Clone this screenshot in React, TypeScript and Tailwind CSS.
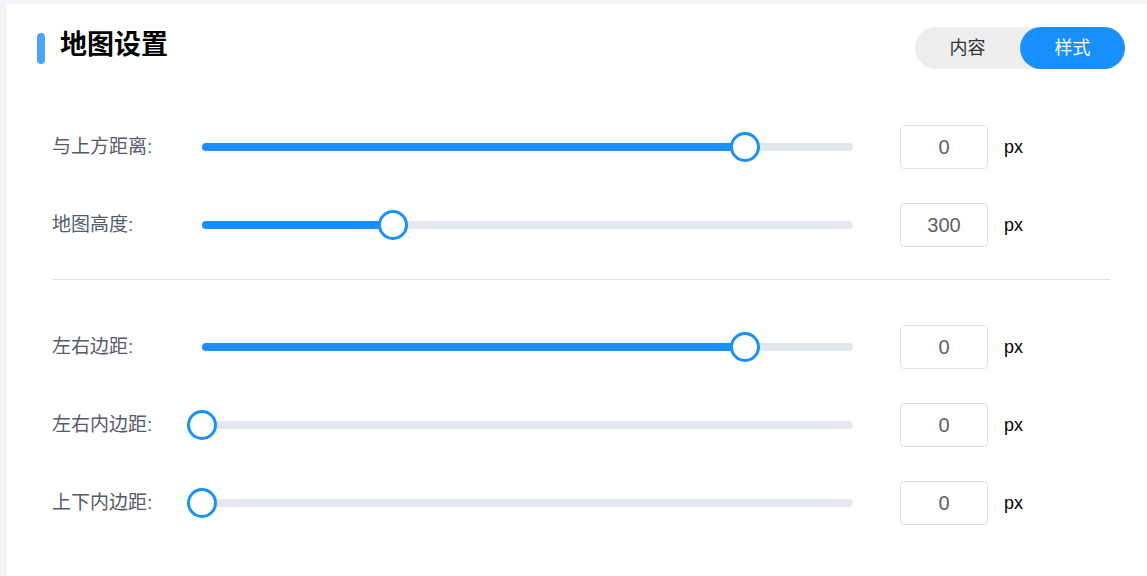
import React from 'react';

type Row = { label: string; value: string; pct: number };

const topRows: Row[] = [
  { label: '与上方距离:', value: '0', pct: 83.4 },
  { label: '地图高度:', value: '300', pct: 29.3 },
];

const bottomRows: Row[] = [
  { label: '左右边距:', value: '0', pct: 83.4 },
  { label: '左右内边距:', value: '0', pct: 0 },
  { label: '上下内边距:', value: '0', pct: 0 },
];

const font = { fontFamily: '"Liberation Sans", "Noto Sans CJK SC", sans-serif' };

function SliderRow({ row }: { row: Row }) {
  return (
    <div className="flex h-[44px] items-center">
      <div className="w-[150px] text-[19px] text-[#555b68]">{row.label}</div>
      {/* track */}
      <div className="relative h-[8px] w-[651px] rounded-full bg-[#e4e7ed]">
        <div className="absolute left-0 top-0 h-full rounded-full bg-[#1890ff]" style={{ width: `${row.pct}%` }} />
        <div
          className="absolute top-1/2 h-[30px] w-[30px] -translate-x-1/2 -translate-y-1/2 rounded-full border-[3px] border-[#1890ff] bg-white"
          style={{ left: `${row.pct}%` }}
        />
      </div>
      <div className="ml-[47px] flex h-[44px] w-[88px] items-center justify-center rounded border border-[#dcdfe6] text-[20px] text-[#606266]">
        {row.value}
      </div>
      <span className="ml-[16px] text-[18px] text-black">px</span>
    </div>
  );
}

export default function App() {
  return (
    <div className="h-[576px] w-[1147px] overflow-hidden bg-[#f3f4f7] pl-[7px] pt-[4px]" style={font}>
      <div className="h-full bg-white pr-[22px] pt-[23px]">
        {/* Header */}
        <div className="flex h-[42px] items-center justify-between pl-[30px]">
          <div className="flex items-center gap-[15px]">
            <span className="h-[31px] w-[8px] rounded-full bg-[#4ea5ff]" />
            <h1 className="-mt-[5px] text-[27px] font-bold leading-none text-black">地图设置</h1>
          </div>
          <div className="flex h-[42px] w-[210px] rounded-full bg-[#eeeeee] text-[18px]">
            <button className="flex-1 rounded-full text-[#333]">内容</button>
            <button className="flex-1 rounded-full bg-[#1890ff] text-white">样式</button>
          </div>
        </div>

        {/* Rows */}
        <div className="mt-[56px] flex flex-col gap-[34px] pl-[45px]">
          {topRows.map((r) => (
            <SliderRow key={r.label} row={r} />
          ))}
        </div>

        <div className="ml-[45px] mr-[15px] mt-[32px] h-px bg-[#e0e0e0]" />

        <div className="mt-[45px] flex flex-col gap-[34px] pl-[45px]">
          {bottomRows.map((r) => (
            <SliderRow key={r.label} row={r} />
          ))}
        </div>
      </div>
    </div>
  );
}
